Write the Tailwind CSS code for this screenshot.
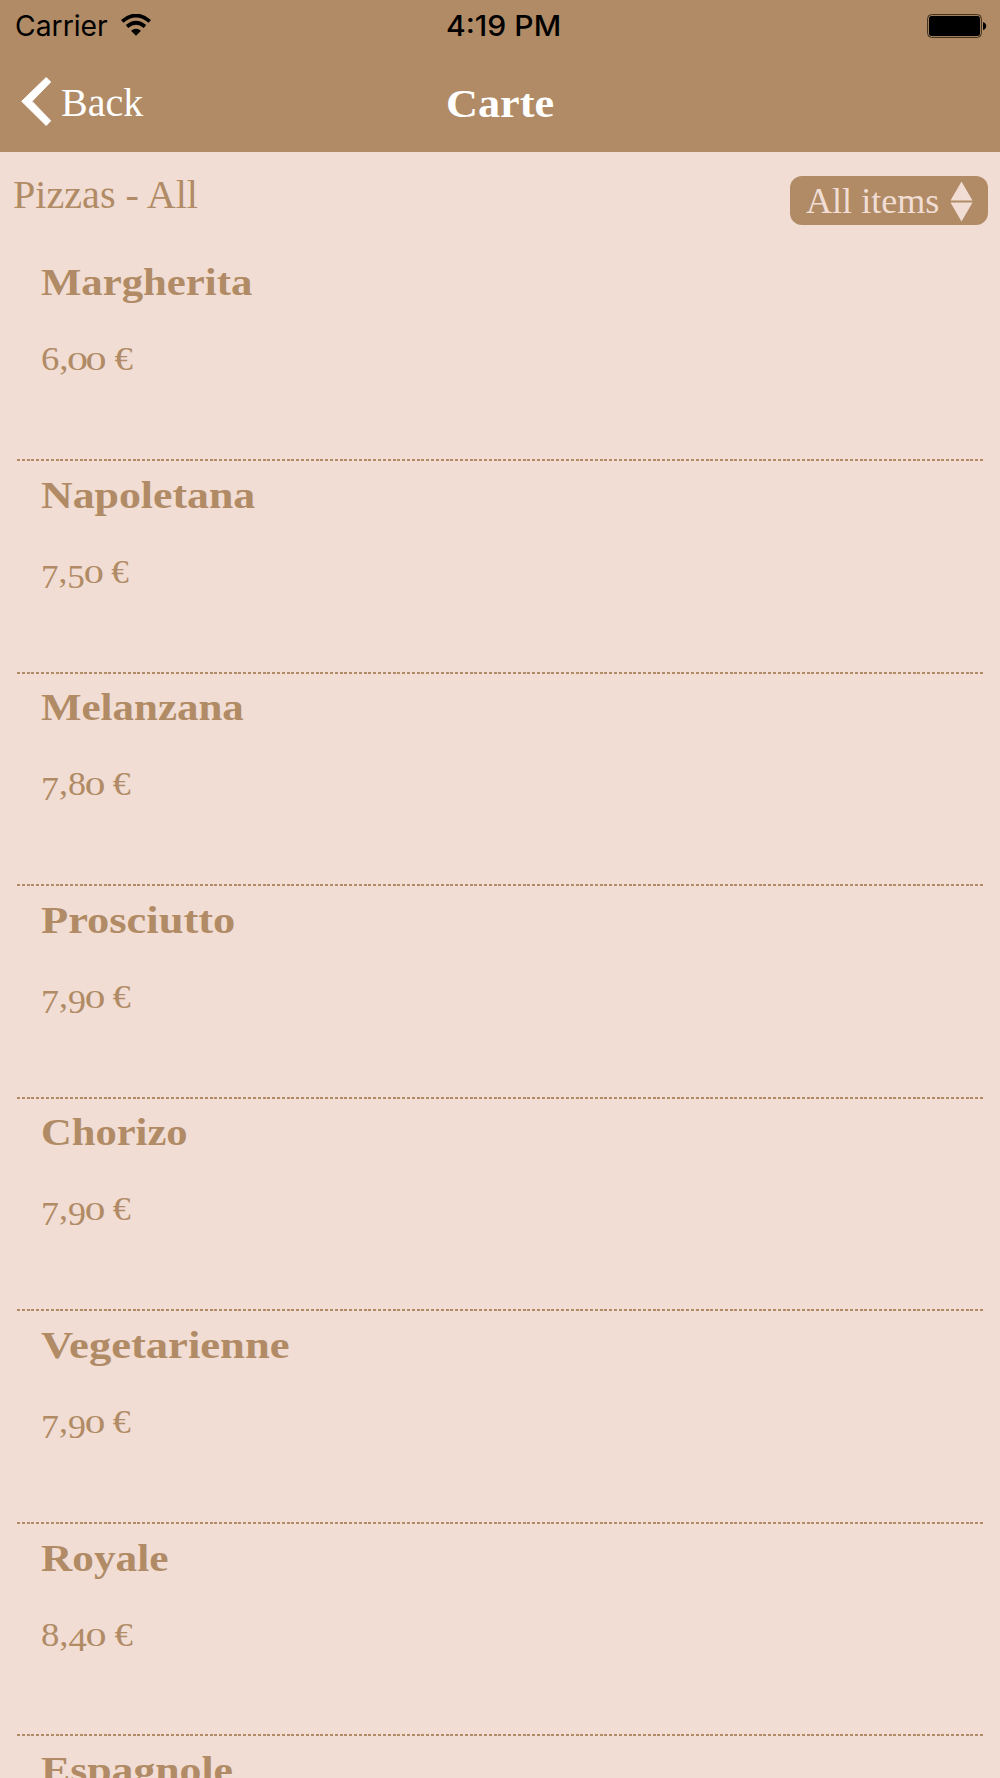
<!DOCTYPE html>
<html lang="en">
<head>
<meta charset="utf-8">
<title>Carte</title>
<script src="https://cdn.jsdelivr.net/npm/@tailwindcss/browser@4"></script>
</head>
<body class="h-[1778px] w-[1000px] overflow-hidden bg-[#f1ddd4] font-['Liberation_Serif',serif] text-[#b08b65]">
<header class="h-[152px] bg-[#b08b65]">
  <div class="grid h-[50px] grid-cols-3 items-center px-[15px] font-['Inter',sans-serif] text-[28px] leading-[50px] text-black">
    <div class="flex items-center gap-3 pt-px">
      <span class="w-[94px] whitespace-nowrap"><span data-w="93" class="inline-block origin-left">Carrier</span></span>
      <svg class="-mt-[3px] h-[22px] w-[30px]" viewBox="0 0 30 22" fill="none" stroke="#000" stroke-width="3.8"><path d="M1.2 7.4Q15-4.4 28.8 7.4M6 12.5Q15 4.9 24 12.5"/><path d="M10 16.8Q15 12.6 20 16.8L15 21.8Z" fill="#000" stroke="none"/></svg>
    </div>
    <div class="pt-px pl-[108px] font-medium whitespace-nowrap"><span data-w="115" class="inline-block origin-left">4:19 PM</span></div>
    <div class="flex items-center justify-end">
      <svg class="-mr-[2px] h-[24px] w-[60px]" viewBox="0 0 60 24"><rect x=".6" y=".6" width="53.8" height="22.8" rx="4" fill="none" stroke="#3a2a1a"/><rect x="2" y="2" width="51" height="20" rx="2.5"/><path d="M56 8q3.2 1 3.2 4T56 16Z"/></svg>
    </div>
  </div>
  <div class="grid h-[102px] grid-cols-3 px-5 text-[41px] leading-[50px] text-white">
    <div class="flex pt-[26px]">
      <svg class="h-[50px] w-[32px]" viewBox="0 0 32 50"><path d="M26.2 1.5 30.7 6 12 25.3 30.7 44.7 26.2 49.5 1.7 25.3Z" fill="#fff" stroke="#fff" stroke-width="1" stroke-linejoin="round"/></svg>
      <span class="ml-[9px] pt-px"><span data-w="82" class="inline-block origin-left">Back</span></span>
    </div>
    <h1 class="pt-[28px] pl-[106px] font-bold"><span data-w="108" class="inline-block origin-left">Carte</span></h1>
  </div>
</header>
<main>
  <div class="flex h-[96.5px] justify-between pr-3 pl-[13px]">
    <h2 class="pt-[17px] text-[41px] leading-[50px] whitespace-nowrap"><span data-w="185" class="inline-block origin-left">Pizzas - All</span></h2>
    <button class="mt-[24px] flex h-[49px] w-[198px] rounded-[12px] bg-[#b08b65] pl-4 text-left text-[35px] leading-[51px] text-[#f1ddd4]">
      <span class="w-[144px] whitespace-nowrap"><span data-w="133" class="inline-block origin-left">All items</span></span>
      <svg class="mt-[5px] h-[41px] w-[23px]" viewBox="0 0 23 41" fill="#f1ddd4"><path d="M11.5.5 22.5 19.5H.5ZM.5 21.5H22.5L11.5 40.5Z"/></svg>
    </button>
  </div>
  <ul id="menu" class="h-[1529.5px] overflow-hidden"></ul>
</main>
<template id="row">
  <li class="flex h-[212.55px] flex-col pt-[9.8px]">
    <h3 class="pl-[41px] text-[38.5px] leading-[48px] font-bold"><span class="name inline-block origin-left"></span></h3>
    <p class="mt-[33px] h-[37px] overflow-hidden pl-[41px] text-[33.5px] leading-[40px] whitespace-pre"><span class="price inline-block origin-left"></span></p>
    <div class="mt-auto mr-[17px] ml-[17px] h-[2px] bg-[repeating-linear-gradient(90deg,#b08b65_0_3px,transparent_3px_4.815px)]"></div>
  </li>
</template>
<template id="figures">
  <span class="low inline-block origin-[50%_78%] scale-x-[1.15] scale-y-[0.78]"></span>
  <span class="drop inline-block translate-y-[5px]"></span>
</template>
<script>
const items = [
  ["Margherita", "6,00 €", 211, 92], ["Napoletana", "7,50 €", 214, 88],
  ["Melanzana", "7,80 €", 203, 90], ["Prosciutto", "7,90 €", 194, 90],
  ["Chorizo", "7,90 €", 147, 90], ["Vegetarienne", "7,90 €", 249, 90],
  ["Royale", "8,40 €", 127, 92], ["Espagnole", "", 192, 0]
];
const figures = document.getElementById("figures").content;
const menu = document.getElementById("menu");
for (const [name, price, nameWidth, priceWidth] of items) {
  const row = document.getElementById("row").content.cloneNode(true);
  const n = row.querySelector(".name"), p = row.querySelector(".price");
  n.textContent = name;
  n.dataset.w = nameWidth;
  if (price) p.dataset.w = priceWidth;
  // Old-style figures: 0-2 sit at x-height, 3 4 5 7 9 hang below the baseline.
  for (const ch of price) {
    const kind = "012".includes(ch) ? ".low" : "34579".includes(ch) ? ".drop" : null;
    if (!kind) { p.append(ch); continue; }
    const s = figures.querySelector(kind).cloneNode(true);
    s.textContent = ch;
    p.append(s);
  }
  menu.append(row);
}
const fit = el => { el.style.transform = `scaleX(${el.dataset.w / el.offsetWidth})`; };
const observer = new ResizeObserver(entries => entries.forEach(e => fit(e.target)));
for (const el of document.querySelectorAll("[data-w]")) {
  fit(el);
  observer.observe(el);
}
addEventListener("load", () => document.querySelectorAll("[data-w]").forEach(fit));
</script>
</body>
</html>
